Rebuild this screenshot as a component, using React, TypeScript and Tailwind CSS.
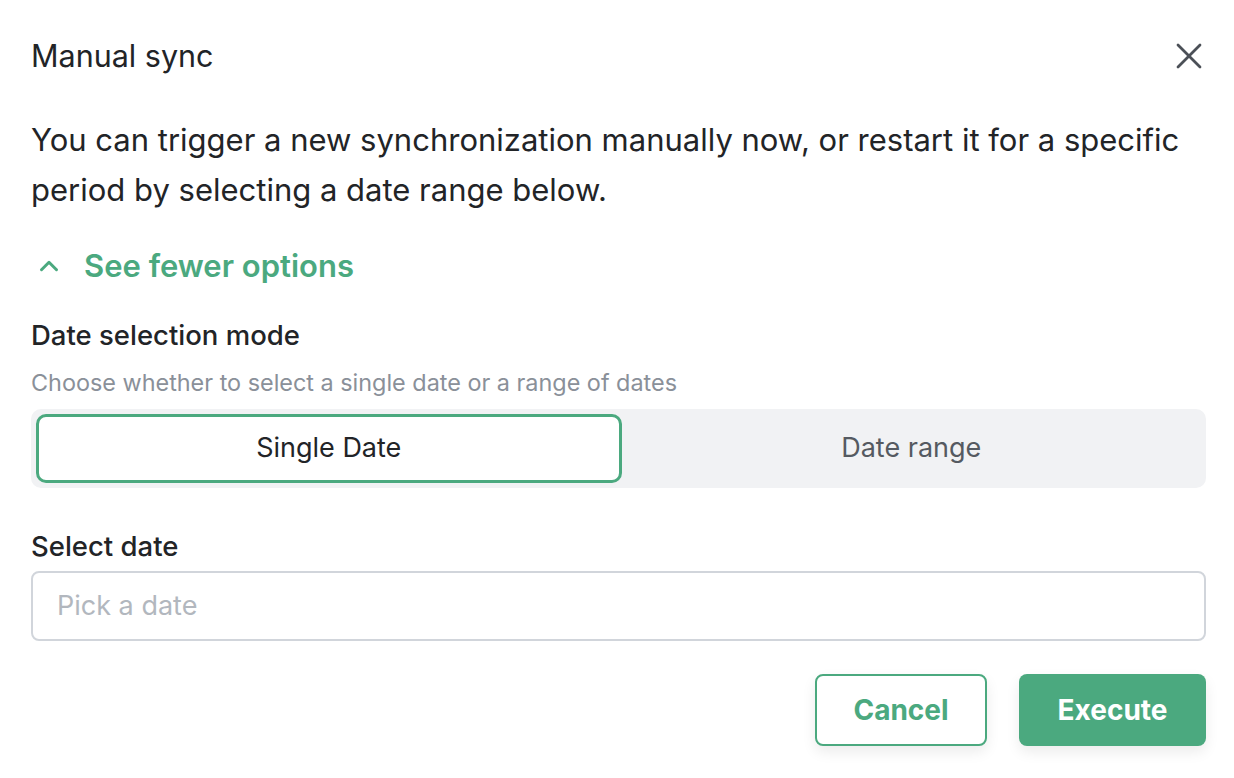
import React, { useState } from 'react';
import { X, ChevronUp } from 'lucide-react';

const font = { fontFamily: 'Inter, "Noto Sans", sans-serif' };

export default function App() {
  const [mode, setMode] = useState<'single' | 'range'>('single');

  return (
    <div className="w-[1234px] h-[778px] bg-white text-[#222427] overflow-hidden" style={font}>
      <div className="pl-[31px] pr-[28px] pt-[36px]">
        {/* header */}
        <div className="flex items-center justify-between h-[40px]">
          <h2 className="text-[30.5px] font-normal">Manual sync</h2>
          <button className="mr-[-5px] text-[#4b5057]">
            <X size={44} strokeWidth={1.5} />
          </button>
        </div>

        <p className="mt-[39px] text-[31px] leading-[50px] text-[#222427]">
          You can trigger a new synchronization manually now, or restart it for a specific period by selecting a date range below.
        </p>

        <button className="mt-[31px] flex items-center gap-[20px] text-[#4ba97f] font-semibold text-[31px] h-[40px]">
          <ChevronUp size={30} strokeWidth={2.4} className="ml-[3px]" />
          See fewer options
        </button>

        <div className="mt-[34px] text-[27.5px] font-medium h-[30px] leading-[30px]">Date selection mode</div>
        <div className="mt-[18px] text-[23.4px] text-[#8a9099] h-[30px] leading-[30px]">
          Choose whether to select a single date or a range of dates
        </div>

        <div className="mt-[11px] bg-[#f1f2f4] rounded-[10px] p-[5px] flex h-[79px]">
          <button
            onClick={() => setMode('single')}
            className={`flex-1 rounded-[10px] text-[27px] ${mode === 'single' ? 'bg-white border-[3px] border-[#4ba97f] text-[#222427]' : 'text-[#555a61]'}`}
          >
            Single Date
          </button>
          <button
            onClick={() => setMode('range')}
            className={`flex-1 rounded-[10px] text-[27px] ${mode === 'range' ? 'bg-white border-[3px] border-[#4ba97f] text-[#222427]' : 'text-[#555a61]'}`}
          >
            Date range
          </button>
        </div>

        <div className="mt-[43px] text-[27.5px] font-medium h-[30px] leading-[30px]">Select date</div>
        <div className="mt-[10px] h-[70px] border-2 border-[#d1d5db] rounded-[8px] flex items-center px-[24px]">
          <span className="text-[27px] text-[#b2b7be]">Pick a date</span>
        </div>

        <div className="mt-[33px] flex justify-end gap-[32px]">
          <button className="w-[172px] h-[72px] border-2 border-[#4ba97f] rounded-[8px] text-[#4ba97f] text-[28px] font-bold bg-white shadow-[0_6px_14px_rgba(0,0,0,0.08)]">
            Cancel
          </button>
          <button className="w-[187px] h-[72px] bg-[#4ba97f] rounded-[8px] text-white text-[28px] font-bold shadow-[0_6px_14px_rgba(0,0,0,0.08)]">
            Execute
          </button>
        </div>
      </div>
    </div>
  );
}
